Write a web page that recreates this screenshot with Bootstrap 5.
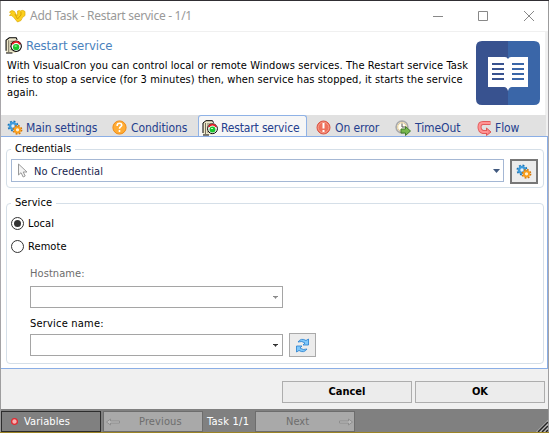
<!DOCTYPE html>
<html lang="en">
<head>
<meta charset="utf-8">
<title>Add Task - Restart service - 1/1</title>
<link href="https://cdn.jsdelivr.net/npm/bootstrap@5.3.0/dist/css/bootstrap.min.css" rel="stylesheet">
<style>
html,body{height:433px;overflow:hidden}
body{font-family:"DejaVu Sans Condensed","DejaVu Sans",sans-serif;font-stretch:condensed;font-size:11px;line-height:14px;color:#000;background:#a5a5a5;width:549px;white-space:nowrap}
.desk{width:549px;height:433px;border-top:1px solid #302e33;border-bottom:1px solid #9c8427;padding:0 1px;background:linear-gradient(#999,#b5b2b8 45%,#999)}
.win{width:547px;height:431px;background:#fff}
.titlebar{height:31px;border-bottom:1px solid #f0f0f0;padding:0 13px 0 8px;color:#999}
.titlebar .cap{font-family:"Noto Sans",sans-serif;font-size:12px;letter-spacing:-.29px;margin-left:4px;flex:1}
.intro{height:83px;border-right:3px solid #f0f0f0;padding:5px 5px 0 4px}
.intro h1{font-size:13px;line-height:17px;letter-spacing:-.08px;color:#4a82bd;margin:0 0 0 4px}
.intro p{margin:5px 0 0 2px;line-height:13.600px;letter-spacing:.085px}
.book{margin-top:4px}
.tabs{height:21px;background:#e1e1e1;color:#24408e;font-size:12px;letter-spacing:-.08px;border-right:2px solid #f0f0f0}
.tabs .tabitem{height:21px;padding-left:6px;padding-top:4px}
.tabs .tabitem span{margin-left:3px}
.tabs .current{background:#f6f6f6;border:1px solid #8fb2e6;border-bottom:0;border-radius:3px 3px 0 0;height:22px;padding-left:3px;padding-top:2px;letter-spacing:-.16px}
.panel{height:233px;border:1px solid #8aaee6;border-width:1px 1px 1px 0;padding:5px 3px 0 5px}
fieldset.group{border:1px solid #d5dfe8;border-radius:4px;margin:0}
fieldset.group>legend{float:none;width:auto;font-size:11px;line-height:14px;margin:0 0 0 4px;padding:0 4px}
.cred{height:46px}
fieldset.group.svc{height:168px;margin-top:8px;letter-spacing:.08px}
.opts{padding-top:2px}
.combo{border:1px solid #a5a5a5;height:22px;width:254px;padding:0 4px;background:#fff}
.combo.main{border-color:#a4b7d4;height:23px;width:493px;padding:0 3px 0 5px}
.toolbtn{width:27px;height:24px;border:1px solid #a9a9a9;background:#ececec;padding:0}
.toolbtn.dark{width:28px;height:25px;border:2px solid #777;margin-left:6px}
.opt{height:23px;padding-left:4px}
.opt span{margin-left:4px}
.foot{height:40px;background:#f0f0f0;padding:12px 3px 0 0}
.push{width:130px;height:22px;border:1px solid #adadad;background:#ececec;font-weight:bold;text-align:center;line-height:20px}
.status{height:23px;background:#808080;padding-top:2px;color:#fff}
.sbtn{width:100px;height:21px;border:1px solid #6d6d6d;background:#a9a9a9;color:#6d6d6d}
.sbtn.vars{background:#808080;border-color:#2d2d2d;color:#fff}
svg{display:block;flex:none}
</style>
</head>
<body>
<svg width="0" height="0" class="position-absolute">
<defs>
<symbol id="server" viewBox="0 0 16 16"><path d="M1 15V3L4 .7h6.500V15z" fill="#eee8cb"/><path d="M1 13V3L4 .7h6.500l1 2M1 15h6" fill="none" stroke="#000"/><path d="M3.500 3v11M5 4h4M5 6h3M5 9h1.500M5 12h1.500" stroke="#77705d"/><circle cx="10.500" cy="8.700" r="4.900" fill="#fff" stroke="#000"/><path d="M6.800 6.800a4.200 4.200 0 0 1 7.400 0" fill="none" stroke="#e51b23" stroke-width="1.600"/><circle cx="10.500" cy="9.500" r="3" fill="#19c52d"/><path d="M9 8.500h2" stroke="#b9ffc1"/></symbol>
<symbol id="gears" viewBox="0 0 16 16"><circle cx="6" cy="6" r="4.500" fill="none" stroke="#1773b5" stroke-width="2" stroke-dasharray="1.800 1.730"/><circle cx="6" cy="6" r="3" fill="#e6f2fa" stroke="#3e9bdc" stroke-width="2.600"/><circle cx="10.500" cy="9.800" r="4" fill="none" stroke="#d47505" stroke-width="1.800" stroke-dasharray="1.700 1.440"/><circle cx="10.500" cy="9.800" r="2.600" fill="#fff3d4" stroke="#f99e1c" stroke-width="2"/></symbol>
</defs>
</svg>
<div class="desk"><main class="win d-flex flex-column">
<header class="titlebar d-flex align-items-center flex-shrink-0">
<svg width="17" height="14" viewBox="0 0 17 14"><path d="M.5 3Q3 .5 5.500 2.500L8 7q1-3 .5-5 2-1 3 0 2-1.500 4.500.5v4q-3 1.500-4 5l-3.500 1.500L4 7.500Q2.500 6 .5 6.500L2 4.500z" fill="#fcd01d" stroke="#dba90c" stroke-width=".7"/><path d="m6 5 2.500 5L12 6V3" fill="none" stroke="#d7a106"/></svg>
<span class="cap">Add Task - Restart service - 1/1</span>
<svg width="102" height="12" viewBox="0 0 102 12" fill="none" stroke="#888"><path d="M0 6.500h10M91 1l10 10M101 1 91 11"/><path d="M45.500 1.500h9v9h-9z"/></svg>
</header>
<section class="intro d-flex justify-content-between flex-shrink-0">
<div><div class="d-flex"><svg width="17" height="17"><use href="#server"/></svg><h1 class="fw-normal">Restart service</h1></div>
<p>With VisualCron you can control local or remote Windows services. The Restart service Task<br>tries to stop a service (for 3 minutes) then, when service has stopped, it starts the service<br>again.</p></div>
<svg class="book" width="64" height="64" viewBox="0 0 64 64"><path d="M6 0h26v64H6q-6 0-6-6V6q0-6 6-6z" fill="#38528f"/><path d="M32 0h26q6 0 6 6v52q0 6-6 6H32z" fill="#3a66a8"/><path d="M12 16h17q2 0 3 2 1-2 3-2h17v30H36q-3 0-4 4-1-4-4-4H12z" fill="#fff"/><path d="M16 23h12M16 28h12M16 33h12M16 38h12" stroke="#38528f" stroke-width="2"/><path d="M36 23h12M36 28h12M36 33h12M36 38h12" stroke="#3a66a8" stroke-width="2"/></svg>
</section>
<nav class="tabs d-flex flex-shrink-0">
<div class="tabitem d-flex align-items-center" style="width:105px"><svg width="16" height="16"><use href="#gears"/></svg><span>Main settings</span></div>
<div class="tabitem d-flex align-items-center" style="width:92px"><svg width="15" height="15" viewBox="0 0 15 15"><circle cx="7.500" cy="7.500" r="6.600" fill="#ffac35" stroke="#ef8c17"/><path d="M5.200 6V5q.3-1.700 2.300-1.700t2.300 1.800q0 1-1.200 1.700T7.500 8.700M7.500 10v2" fill="none" stroke="#fff" stroke-width="1.600"/></svg><span style="margin-left:4px">Conditions</span></div>
<div class="tabitem current d-flex align-items-center" style="width:109px"><svg width="16" height="16"><use href="#server"/></svg><span>Restart service</span></div>
<div class="tabitem d-flex align-items-center" style="width:81px;padding-left:9px"><svg width="15" height="15" viewBox="0 0 15 15"><circle cx="7.500" cy="7.500" r="6.500" fill="#ee715d" stroke="#d95445"/><circle cx="7.500" cy="7.500" r="5.300" fill="none" stroke="#f69c88"/><path d="M7.500 3v5.500M7.500 10v2" stroke="#fff" stroke-width="2"/></svg><span style="margin-left:4px">On error</span></div>
<div class="tabitem d-flex align-items-center" style="width:83px;padding-left:7px"><svg width="17" height="16" viewBox="0 0 17 16"><circle cx="7" cy="7" r="5.900" fill="#fffef4" stroke="#a9a9a9" stroke-width="1.600"/><circle cx="7" cy="7" r="4.300" fill="none" stroke="#e3c98f"/><path d="M7 3.500V7h3" fill="none" stroke="#555"/><path d="M6 9h4.500V6.500L15.500 11l-5 4.500V13H6z" fill="#78b84e" stroke="#427b2c"/></svg><span>TimeOut</span></div>
<div class="tabitem d-flex align-items-center"><svg width="15" height="16" viewBox="0 0 15 16"><path d="M13.500 3H6Q2.500 3 2.500 7T6 12h4" fill="none" stroke="#e35b5b" stroke-width="4"/><path d="M9.500 8v7.500L14 12z" fill="#fb8585" stroke="#df5656"/><path d="M13 3H6Q2.500 3 2.500 7T6 12h5" fill="none" stroke="#ff9494" stroke-width="2.200"/></svg><span>Flow</span></div>
</nav>
<section class="panel flex-shrink-0">
<fieldset class="group cred"><legend>Credentials</legend>
<div class="d-flex" style="padding:3px 0 0 4px"><div class="combo main d-flex align-items-center"><svg width="12" height="16" viewBox="0 0 12 16"><path d="M1.500 1v11L4 9.700 6.200 14l2-1-2-4H10z" fill="#f4f4f4" stroke="#999"/></svg><span class="flex-grow-1" style="margin-left:5px;padding-top:2px;letter-spacing:.12px;color:#15234e">No Credential</span><svg width="7" height="4"><path d="M0 0h7L3.500 4z" fill="#41597f"/></svg></div><button class="toolbtn dark d-flex align-items-center justify-content-center" aria-label="Manage credentials"><svg width="16" height="16"><use href="#gears"/></svg></button></div>
</fieldset>
<fieldset class="group svc"><legend>Service</legend>
<div class="opts">
<label class="opt d-flex align-items-center"><svg width="13" height="13" viewBox="0 0 13 13"><circle cx="6.500" cy="6.500" r="6" fill="#fff" stroke="#333"/><circle cx="6.500" cy="6.500" r="3.500" fill="#333"/></svg><span>Local</span></label>
<label class="opt d-flex align-items-center"><svg width="13" height="13" viewBox="0 0 13 13"><circle cx="6.500" cy="6.500" r="6" fill="#fff" stroke="#333"/></svg><span>Remote</span></label>
</div>
<div style="margin-left:23px"><div style="height:28px;padding-top:9px;color:#6d6d6d"><span>Hostname:</span></div>
<div class="combo d-flex align-items-center justify-content-end" style="width:253px"><svg width="5" height="3"><path d="M0 0h5v1H4L2.500 3 1 1H0z" fill="#8b8b8b"/></svg></div>
<div style="height:25px;padding-top:9px"><span style="letter-spacing:.2px">Service name:</span></div>
<div class="d-flex align-items-center"><div class="combo d-flex align-items-center justify-content-end" style="width:253px"><svg width="5" height="3"><path d="M0 0h5v1H4L2.500 3 1 1H0z" fill="#333"/></svg></div><button class="toolbtn d-flex align-items-center justify-content-center" style="margin-left:6px" aria-label="Refresh"><svg width="15" height="15" viewBox="0 0 15 15" fill="#80c8fa" stroke="#247dce" stroke-width=".8"><path d="M3 4Q6-.5 11 2.500L13.500 1v6H8l2-2Q7 2.500 3 4zM12 11q-3 4.500-8 1.500L1.500 14V8H7l-2 2q3 2.500 7 1z"/></svg></button></div></div>
</fieldset>
</section>
<footer class="foot d-flex justify-content-end flex-shrink-0" style="gap:3px"><button class="push p-0">Cancel</button><button class="push p-0">OK</button></footer>
<div class="status d-flex flex-shrink-0">
<div class="sbtn vars d-flex align-items-center" style="padding-left:9px"><svg width="7" height="7"><circle cx="3.500" cy="3.500" r="2.900" fill="#f9b0b0" stroke="#dc2f36" stroke-width="1.400"/></svg><span style="margin-left:6px;letter-spacing:.1px">Variables</span></div>
<div class="sbtn d-flex align-items-center" style="margin-left:2px;padding-left:2px"><svg width="14" height="8" viewBox="0 0 14 8"><path d="m.5 4 4-3v2h9v2h-9v2z" fill="#bbb" stroke="#888" stroke-width=".8"/></svg><span style="margin-left:19px;letter-spacing:.12px">Previous</span></div>
<span style="width:52px;padding:4px 0 0 4px;letter-spacing:.25px">Task 1/1</span>
<div class="sbtn d-flex align-items-center justify-content-between" style="padding:0 1px 0 30px"><span>Next</span><svg width="14" height="8" viewBox="0 0 14 8"><path d="m13.500 4-4-3v2h-9v2h9v2z" fill="#bbb" stroke="#888" stroke-width=".8"/></svg></div>
<svg class="ms-auto align-self-end" width="12" height="12" viewBox="0 0 12 12"><path d="M0 12 12 0v12z" fill="#bbb"/><path d="M2 12 12 2M6 12l6-6M10 12l2-2" stroke="#222" stroke-width="1.500"/></svg>
</div>
</main></div>
<script src="https://cdn.jsdelivr.net/npm/bootstrap@5.3.0/dist/js/bootstrap.bundle.min.js"></script>
</body>
</html>
